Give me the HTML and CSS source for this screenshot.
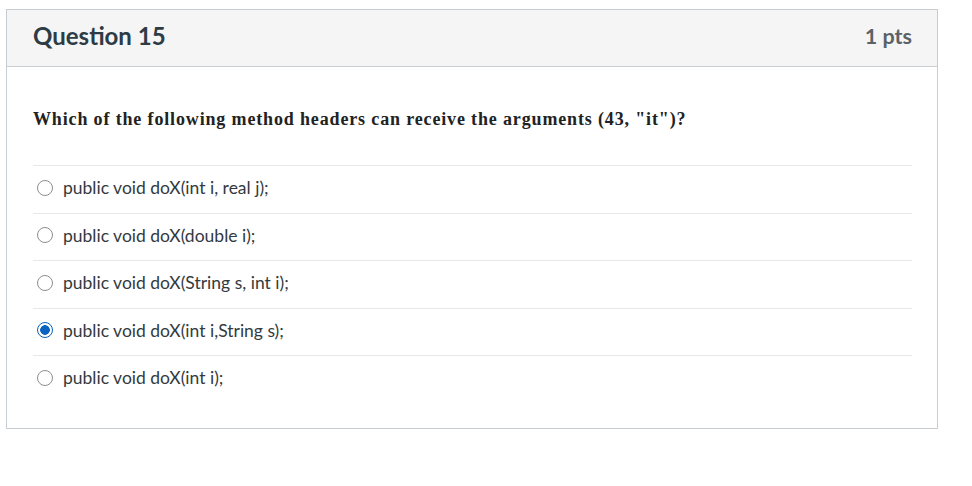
FILE: index.html
```html
<!DOCTYPE html>
<html>
<head>
<meta charset="utf-8">
<link rel="stylesheet" href="styles.css">
</head>
<body>
<div class="card">
  <div class="card-header">
    <h2 class="title">Question 15</h2>
    <span class="pts">1 pts</span>
  </div>
  <div class="card-body">
    <p class="question">Which of the following method headers can receive the arguments (43, "it")?</p>
    <div class="answers">
      <label class="answer"><span class="radio"></span><span>public void doX(int i, real j);</span></label>
      <label class="answer"><span class="radio"></span><span>public void doX(double i);</span></label>
      <label class="answer"><span class="radio"></span><span>public void doX(String s, int i);</span></label>
      <label class="answer"><span class="radio checked"></span><span>public void doX(int i,String s);</span></label>
      <label class="answer"><span class="radio"></span><span>public void doX(int i);</span></label>
    </div>
  </div>
</div>
</body>
</html>
```

FILE: styles.css
```css
html, body {
  margin: 0;
  padding: 0;
  background: #fff;
}
body {
  padding: 9px 0 0 6px;
  font-family: Lato, "Open Sans", sans-serif;
  color: #2d3b45;
}
.card {
  width: 930px;
  border: 1px solid #c7cdd1;
}
.card-header {
  background: #f5f5f5;
  border-bottom: 1px solid #c7cdd1;
  display: flex;
  align-items: center;
  justify-content: space-between;
  padding: 0 25px 5px 26px;
  box-sizing: border-box;
  height: 57px;
}
.title {
  margin: 0;
  font-size: 24px;
  font-weight: 700;
  color: #2d3b45;
}
.pts {
  font-size: 21.5px;
  font-weight: 700;
  color: #5a6268;
}
.card-body {
  padding: 40px 25px 25px 26px;
}
.question {
  margin: 0 0 33px 0;
  font-family: "Liberation Serif", "Times New Roman", serif;
  font-weight: 700;
  font-size: 18px;
  letter-spacing: 0.85px;
  line-height: 25px;
  color: #222;
}
.answer {
  display: flex;
  align-items: center;
  height: 47.5px;
  box-sizing: border-box;
  border-top: 1px solid #e6e8ea;
  font-size: 17.5px;
  color: #333a40;
  padding-bottom: 3px;
}
.radio {
  width: 16px;
  height: 16px;
  border: 1px solid #8a8f93;
  border-radius: 50%;
  margin: 0 10px 0 4px;
  box-sizing: border-box;
  flex: none;
  background: #fff;
}
.radio.checked {
  border: 1.5px solid #0b5fb8;
  background: radial-gradient(circle, #0b63c1 0 4.5px, #fff 5.1px);
}
```
